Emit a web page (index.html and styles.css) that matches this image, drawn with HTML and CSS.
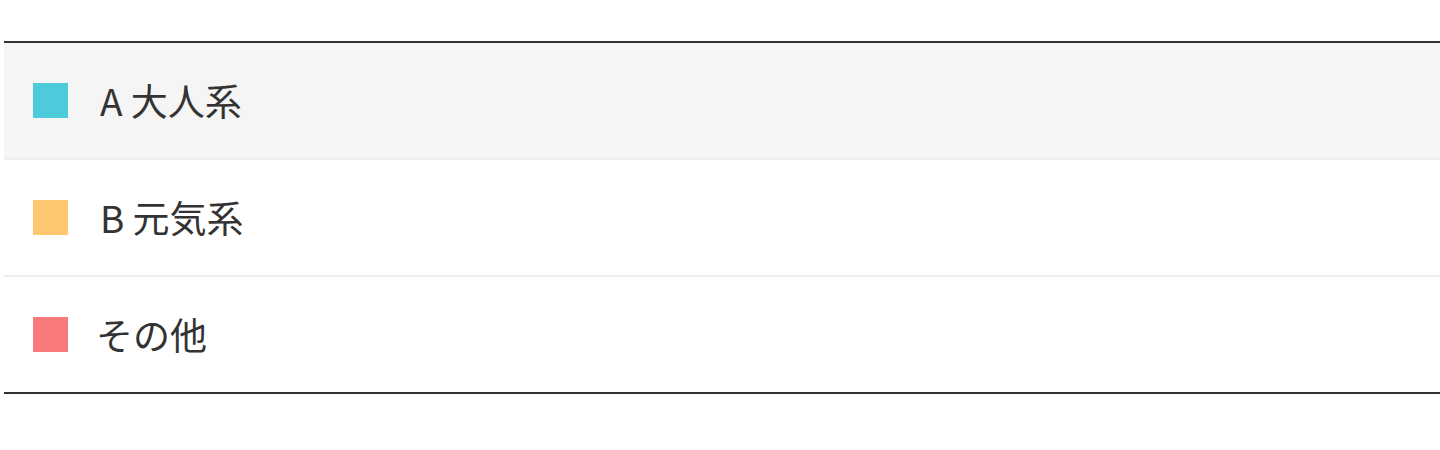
FILE: index.html
```html
<!DOCTYPE html>
<html lang="ja">
<head>
<meta charset="utf-8">
<link rel="stylesheet" href="styles.css">
</head>
<body>
<div class="legend">
  <div class="row row-shaded">
    <span class="swatch swatch-a"></span>
    <span class="label"><span class="code">A</span> 大人系</span>
  </div>
  <div class="row">
    <span class="swatch swatch-b"></span>
    <span class="label"><span class="code">B</span> 元気系</span>
  </div>
  <div class="row">
    <span class="swatch swatch-c"></span>
    <span class="label">その他</span>
  </div>
</div>
</body>
</html>
```

FILE: styles.css
```css
html, body {
  margin: 0;
  padding: 0;
  background: #ffffff;
}

body {
  font-family: "Noto Sans CJK JP", "Noto Sans", sans-serif;
  color: #333333;
  overflow: hidden;
}

.legend {
  margin: 41px 0 0 4px;
  width: 1460px;
  border-top: 2px solid #333333;
  border-bottom: 2px solid #333333;
}

.row {
  display: flex;
  align-items: center;
  gap: 28px;
  height: 115px;
  padding-left: 29px;
  border-bottom: 2px solid #eeeeee;
}

.row:last-child {
  border-bottom: none;
}

.row-shaded {
  background: #f5f5f5;
}

.swatch {
  width: 35px;
  height: 35px;
  flex: none;
}

.swatch-a { background: #4ecbdb; }
.swatch-b { background: #ffc870; }
.swatch-c { background: #f7797a; }

.label {
  font-size: 37px;
  line-height: 1;
}

.code {
  padding-left: 4px;
}
```
